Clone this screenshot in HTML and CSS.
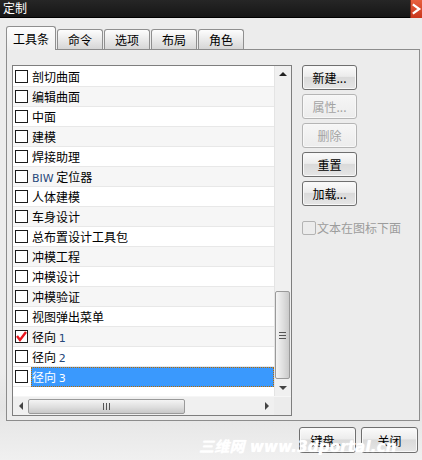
FILE: index.html
```html
<!DOCTYPE html>
<html lang="zh">
<head>
<meta charset="utf-8">
<title>定制</title>
<link rel="stylesheet" href="styles.css">
</head>
<body>
<div class="win">
  <div class="titlebar">
    <span class="title">定制</span>
    <span class="close"><svg width="12" height="18" viewBox="0 0 12 18"><path d="M2 4 L9 9 L2 14" fill="none" stroke="#fff" stroke-width="2.4"/></svg></span>
  </div>
  <div class="body">
    <div class="tabs">
      <div class="tab sel">工具条</div>
      <div class="tab">命令</div>
      <div class="tab">选项</div>
      <div class="tab">布局</div>
      <div class="tab">角色</div>
    </div>
    <div class="panel">
      <div class="listbox">
        <div class="listmain">
          <div class="rows">
            <div class="row"><span class="cb"></span><span class="lbl">剖切曲面</span></div>
            <div class="row alt"><span class="cb"></span><span class="lbl">编辑曲面</span></div>
            <div class="row"><span class="cb"></span><span class="lbl">中面</span></div>
            <div class="row alt"><span class="cb"></span><span class="lbl">建模</span></div>
            <div class="row"><span class="cb"></span><span class="lbl">焊接助理</span></div>
            <div class="row alt"><span class="cb"></span><span class="lbl"><span class="lat">BIW</span> 定位器</span></div>
            <div class="row"><span class="cb"></span><span class="lbl">人体建模</span></div>
            <div class="row alt"><span class="cb"></span><span class="lbl">车身设计</span></div>
            <div class="row"><span class="cb"></span><span class="lbl">总布置设计工具包</span></div>
            <div class="row alt"><span class="cb"></span><span class="lbl">冲模工程</span></div>
            <div class="row"><span class="cb"></span><span class="lbl">冲模设计</span></div>
            <div class="row alt"><span class="cb"></span><span class="lbl">冲模验证</span></div>
            <div class="row"><span class="cb"></span><span class="lbl">视图弹出菜单</span></div>
            <div class="row alt"><span class="cb on"><svg width="11" height="11" viewBox="0 0 11 11"><path d="M1 5 L4 9 L10 1" fill="none" stroke="#e8141c" stroke-width="2.4"/></svg></span><span class="lbl">径向 <span class="lat">1</span></span></div>
            <div class="row"><span class="cb"></span><span class="lbl">径向 <span class="lat">2</span></span></div>
            <div class="row sel"><span class="cb"></span><span class="lbl">径向 <span class="lat">3</span></span></div>
          </div>
          <div class="vscroll">
            <span class="arr up"></span>
            <div class="vtrack"><div class="vthumb"><span class="grip"></span></div></div>
            <span class="arr down"></span>
          </div>
        </div>
        <div class="hbar">
          <div class="hscroll">
            <span class="arr left"></span>
            <div class="htrack"><div class="hthumb"><span class="hgrip"></span></div></div>
            <span class="arr right"></span>
          </div>
          <div class="corner"></div>
        </div>
      </div>
      <div class="side">
        <button class="btn">新建...</button>
        <button class="btn dis">属性...</button>
        <button class="btn dis">删除</button>
        <button class="btn">重置</button>
        <button class="btn">加载...</button>
        <label class="opt"><span class="cb dis"></span>文本在图标下面</label>
      </div>
    </div>
    <div class="footer">
      <button class="btn wide">键盘...</button>
      <button class="btn wide">关闭</button>
    </div>
  </div>
  <div class="watermark">三维网 www.3dportal.cn</div>
</div>
</body>
</html>
```
FILE: styles.css
```css
* { box-sizing: border-box; }
html, body { margin: 0; padding: 0; }
body {
  width: 422px; height: 460px; overflow: hidden;
  font-family: "Liberation Sans", "Noto Sans CJK SC", sans-serif;
  font-size: 12px; color: #000;
  background: #e9e9e9;
}
.win { position: relative; width: 422px; height: 460px; }
.titlebar {
  height: 18px; background: linear-gradient(#262626, #161616);
  display: flex; align-items: center; justify-content: space-between;
  border-bottom: 1px solid #000;
}
.title { color: #fff; padding-left: 3px; font-size: 12px; line-height: 18px; }
.close {
  width: 12px; height: 18px; background: linear-gradient(#e8603e, #c9371d);
  display: flex; border-left: 1px solid #7a2a18;
}
.body {
  height: 442px;
  background: linear-gradient(#ececec 80%, #e4e4e4 88%, #f0f0f0);
  padding: 8px 2px 0 6px;
}
.tabs { display: flex; align-items: flex-end; height: 23px; }
.tab {
  width: 46px; height: 20px; line-height: 19px; font-size: 12px; text-align: center;
  font-family: "Noto Sans CJK SC", sans-serif;
  border: 1px solid #8f8f8f; border-bottom: none; border-radius: 3px 3px 0 0;
  background: linear-gradient(#fdfdfd, #e6e6e6 60%, #d6d6d6);
  margin-left: 1px;
}
.tab.sel {
  width: 50px; line-height: 23px; margin-left: 0;
  background: linear-gradient(#fdfdfd, #efefef);
  position: relative; z-index: 1; margin-bottom: -1px; height: 24px;
}
.panel {
  width: 414px; height: 372px;
  border: 1px solid #8c8c8c; background: #ececec;
  display: flex; padding: 15px 0 0 5px; gap: 10px;
}
.listbox {
  width: 280px; height: 351px; border: 1px solid #7e7e7e; background: #fff;
  display: flex; flex-direction: column;
}
.listmain { flex: 1; display: flex; min-height: 0; }
.rows { flex: 1; padding-top: 1px; overflow: hidden; }
.row {
  height: 20px; display: flex; align-items: center; padding-left: 2px;
  border-bottom: 1px solid #e8e8e8; background: #fff;
}
.row.alt { background: #f6f6f6; }
.cb {
  width: 13px; height: 13px; border: 1px solid #1a1a1a; background: #fff;
  display: inline-flex; align-items: center; justify-content: center; flex: none;
}
.lbl {
  margin-left: 3px; padding-left: 1px; height: 20px; line-height: 19px;
  flex: 1; font-family: "Noto Sans CJK SC", sans-serif;
}
.lat { font-family: "DejaVu Sans", sans-serif; font-size: 11px; color: #27487a; }
.row.sel .lbl {
  background: #3a99fd; color: #fff;
  outline: 1px dotted #b96a00; outline-offset: -1px;
}
.row.sel .lat { color: #fff; }
.vscroll {
  width: 17px; background: #f0f0f0; border-left: 1px solid #e4e4e4;
  display: flex; flex-direction: column; align-items: center;
}
.vtrack { flex: 1; width: 100%; display: flex; flex-direction: column; justify-content: flex-end; padding: 0 1px 0 0; }
.vthumb {
  height: 88px; margin-bottom: 1px; border: 1px solid #9a9a9a; border-radius: 2px;
  background: linear-gradient(90deg, #f4f4f4, #dedede 55%, #cacaca);
  display: flex; align-items: center; justify-content: center;
}
.grip { width: 7px; height: 7px; border-top: 1px solid #555; border-bottom: 1px solid #555; position: relative; }
.grip::after { content: ""; position: absolute; left: 0; right: 0; top: 2px; border-top: 1px solid #555; }
.arr { width: 0; height: 0; flex: none; }
.up { margin: 6px 0 5px; border-left: 4px solid transparent; border-right: 4px solid transparent; border-bottom: 4px solid #222; }
.down { margin: 6px 0 6px; border-left: 4px solid transparent; border-right: 4px solid transparent; border-top: 4px solid #444; }
.hbar { height: 19px; display: flex; background: #f0f0f0; border-top: 1px solid #f6f6f6; }
.hscroll { flex: 1; display: flex; align-items: center; padding-left: 6px; }
.left { border-top: 4px solid transparent; border-bottom: 4px solid transparent; border-right: 4px solid #444; }
.right { margin: 0 5px 0 4px; border-top: 4px solid transparent; border-bottom: 4px solid transparent; border-left: 4px solid #444; }
.htrack { flex: 1; height: 100%; display: flex; align-items: center; padding-left: 5px; }
.hthumb {
  width: 157px; height: 15px; border: 1px solid #9a9a9a; border-radius: 2px;
  background: linear-gradient(#f4f4f4, #dedede 55%, #c8c8c8);
  display: flex; align-items: center; justify-content: center;
}
.hgrip { width: 7px; height: 7px; border-left: 1px solid #555; border-right: 1px solid #555; position: relative; }
.hgrip::after { content: ""; position: absolute; top: 0; bottom: 0; left: 2px; border-left: 1px solid #555; }
.corner { width: 17px; background: #ececec; }
.side { display: flex; flex-direction: column; gap: 4px; width: 56px; }
.btn {
  height: 25px; width: 55px; padding: 0;
  border: 1px solid #6f6f6f; border-radius: 3px;
  background: linear-gradient(#fbfbfb, #ececec 45%, #dadada 50%, #e6e6e6);
  font-family: "Noto Sans CJK SC", sans-serif; font-size: 12px; color: #000;
  box-shadow: inset 0 0 0 1px #f8f8f8;
}
.btn.dis { border-color: #b5b5b5; color: #a3a3a3; background: linear-gradient(#f6f6f6, #ececec); }
.opt {
  display: flex; align-items: center; margin-top: 9px; color: #9c9c9c;
  font-family: "Noto Sans CJK SC", sans-serif; font-size: 12px; white-space: nowrap;
}
.cb.dis { border-color: #b3b3b3; border-radius: 2px; width: 14px; height: 14px; background: #ececec; margin-right: 1px; }
.footer { display: flex; justify-content: flex-end; gap: 5px; padding: 6px 2px 0 0; }
.btn.wide { width: 57px; height: 26px; }
.watermark {
  position: absolute; left: 199px; top: 435px;
  color: #fff; font-family: "DejaVu Sans", "Noto Sans CJK SC", sans-serif;
  font-weight: bold; font-style: italic; font-size: 15px; letter-spacing: 0.2px;
  text-shadow: 0 0 1px #fff;
}
```
